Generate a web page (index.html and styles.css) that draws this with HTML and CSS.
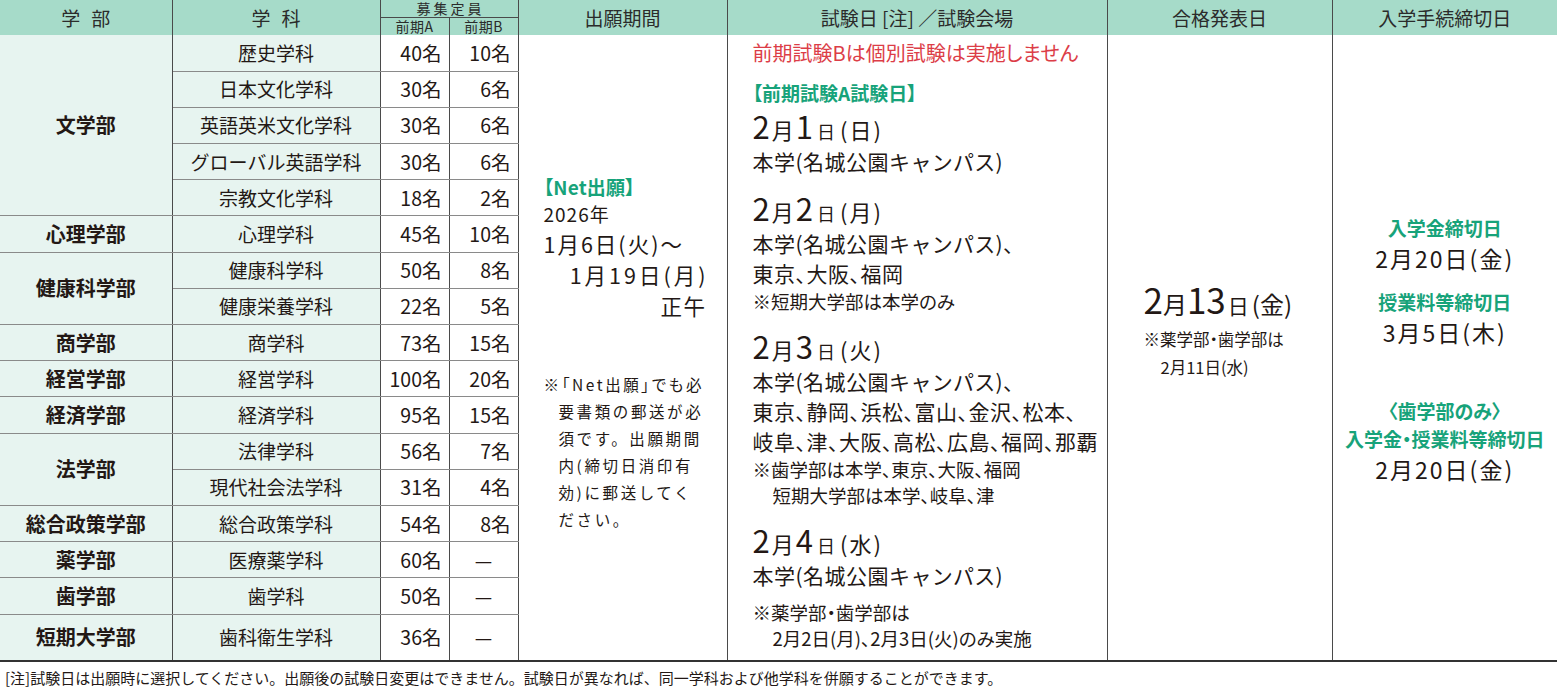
FILE: index.html
```html
<!DOCTYPE html>
<html lang="ja">
<head>
<meta charset="utf-8">
<title>入試日程</title>
<link rel="stylesheet" href="styles.css">
</head>
<body>
<table class="tbl">
  <colgroup>
    <col class="c-fac"><col class="c-dep"><col class="c-n"><col class="c-n">
    <col class="c-app"><col class="c-exam"><col class="c-res"><col class="c-proc">
  </colgroup>
  <thead>
    <tr class="h1">
      <th rowspan="2" class="sp">学部</th>
      <th rowspan="2" class="sp">学科</th>
      <th colspan="2" class="cap">募集定員</th>
      <th rowspan="2">出願期間</th>
      <th rowspan="2">試験日 [注] ／試験会場</th>
      <th rowspan="2">合格発表日</th>
      <th rowspan="2" class="last">入学手続締切日</th>
    </tr>
    <tr class="h2">
      <th class="sub">前期A</th>
      <th class="sub">前期B</th>
    </tr>
  </thead>
  <tbody>
    <tr>
      <td rowspan="5" class="fac">文学部</td>
      <td class="dep">歴史学科</td><td class="num">40名</td><td class="num">10名</td>
      <td rowspan="17" class="app">
        <div class="app-in">
          <p class="grn">【Net出願】</p>
          <p class="yr">2026年</p>
          <p class="ad">1月6日(火)〜</p>
          <p class="ad r wide">1月19日(月)</p>
          <p class="ad r">正午</p>
          <div class="anote">
            <p class="first">※「Net出願」でも必</p>
            <p class="in">要書類の郵送が必</p>
            <p class="in">須です。出願期間</p>
            <p class="in">内(締切日消印有</p>
            <p class="in">効)に郵送してく</p>
            <p class="in">ださい。</p>
          </div>
        </div>
      </td>
      <td rowspan="17" class="exam">
        <p class="red">前期試験Bは個別試験は実施しません</p>
        <p class="grn g2">【前期試験A試験日】</p>
        <p class="bd b1"><span class="n">2</span><span class="m">月</span><span class="n">1</span><span class="dy">日</span><span class="w">(日)</span></p>
        <p class="pl">本学(名城公園<span class="kn">キャンパス</span>)</p>
        <p class="bd"><span class="n">2</span><span class="m">月</span><span class="n">2</span><span class="dy">日</span><span class="w">(月)</span></p>
        <p class="pl">本学(名城公園<span class="kn">キャンパス</span>)、</p>
        <p class="pl">東京、大阪、福岡</p>
        <p class="nt">※短期大学部は本学のみ</p>
        <p class="bd"><span class="n">2</span><span class="m">月</span><span class="n">3</span><span class="dy">日</span><span class="w">(火)</span></p>
        <p class="pl">本学(名城公園<span class="kn">キャンパス</span>)、</p>
        <p class="pl">東京、静岡、浜松、富山、金沢、松本、</p>
        <p class="pl">岐阜、津、大阪、高松、広島、福岡、那覇</p>
        <p class="nt">※歯学部は本学、東京、大阪、福岡</p>
        <p class="nt in">短期大学部は本学、岐阜、津</p>
        <p class="bd"><span class="n">2</span><span class="m">月</span><span class="n">4</span><span class="dy">日</span><span class="w">(水)</span></p>
        <p class="pl">本学(名城公園<span class="kn">キャンパス</span>)</p>
        <p class="nt n4">※薬学部・歯学部は</p>
        <p class="nt in">2月2日(月)、2月3日(火)のみ実施</p>
      </td>
      <td rowspan="17" class="res">
        <p class="rd"><span class="n">2</span><span class="m">月</span><span class="n">13</span><span class="dy">日</span><span class="w">(金)</span></p>
        <p class="rnt">※薬学部・歯学部は</p>
        <p class="rnt in">2月11日(水)</p>
      </td>
      <td rowspan="17" class="proc">
        <div class="proc-in">
          <p class="grn">入学金締切日</p>
          <p class="pd">2月20日(金)</p>
          <p class="grn p2">授業料等締切日</p>
          <p class="pd">3月5日(木)</p>
          <p class="grn p3">〈歯学部のみ〉</p>
          <p class="grn">入学金・授業料等締切日</p>
          <p class="pd">2月20日(金)</p>
        </div>
      </td>
    </tr>
    <tr><td class="dep">日本文化学科</td><td class="num">30名</td><td class="num">6名</td></tr>
    <tr><td class="dep">英語英米文化学科</td><td class="num">30名</td><td class="num">6名</td></tr>
    <tr><td class="dep">グローバル英語学科</td><td class="num">30名</td><td class="num">6名</td></tr>
    <tr><td class="dep">宗教文化学科</td><td class="num">18名</td><td class="num">2名</td></tr>
    <tr><td class="fac">心理学部</td><td class="dep">心理学科</td><td class="num">45名</td><td class="num">10名</td></tr>
    <tr><td rowspan="2" class="fac">健康科学部</td><td class="dep">健康科学科</td><td class="num">50名</td><td class="num">8名</td></tr>
    <tr><td class="dep">健康栄養学科</td><td class="num">22名</td><td class="num">5名</td></tr>
    <tr><td class="fac">商学部</td><td class="dep">商学科</td><td class="num">73名</td><td class="num">15名</td></tr>
    <tr><td class="fac">経営学部</td><td class="dep">経営学科</td><td class="num">100名</td><td class="num">20名</td></tr>
    <tr><td class="fac">経済学部</td><td class="dep">経済学科</td><td class="num">95名</td><td class="num">15名</td></tr>
    <tr><td rowspan="2" class="fac">法学部</td><td class="dep">法律学科</td><td class="num">56名</td><td class="num">7名</td></tr>
    <tr><td class="dep">現代社会法学科</td><td class="num">31名</td><td class="num">4名</td></tr>
    <tr><td class="fac">総合政策学部</td><td class="dep">総合政策学科</td><td class="num">54名</td><td class="num">8名</td></tr>
    <tr><td class="fac">薬学部</td><td class="dep">医療薬学科</td><td class="num">60名</td><td class="num dash">—</td></tr>
    <tr><td class="fac">歯学部</td><td class="dep">歯学科</td><td class="num">50名</td><td class="num dash">—</td></tr>
    <tr class="lastrow"><td class="fac">短期大学部</td><td class="dep">歯科衛生学科</td><td class="num">36名</td><td class="num dash">—</td></tr>
  </tbody>
</table>
<p class="foot">[注]試験日は出願時に選択してください。出願後の試験日変更はできません。試験日が異なれば、同一学科および他学科を併願することができます。</p>
</body>
</html>
```

FILE: styles.css
```css
* { box-sizing: border-box; }
body {
  margin: 0;
  background: #fff;
  color: #231815;
  font-family: "Noto Sans CJK JP", "Noto Sans", sans-serif;
  font-feature-settings: "palt";
}
p { margin: 0; }

.tbl {
  border-collapse: collapse;
  table-layout: fixed;
  width: 1557px;
}
.c-fac { width: 172px; }
.c-dep { width: 208px; }
.c-n { width: 69px; }
.c-app { width: 209px; }
.c-exam { width: 380px; }
.c-res { width: 225px; }
.c-proc { width: 225px; }

th {
  background: #a6dbc9;
  font-weight: 400;
  font-size: 19px;
  line-height: 20px;
  padding: 0;
  border-right: 1px solid #4a4a4a;
  color: #2b2b2b;
  white-space: nowrap;
}
th.last { border-right: none; }
th.sp { letter-spacing: 11px; padding-left: 11px; }
.h1 { height: 17px; }
.h2 { height: 18px; }
th.cap {
  font-size: 14px;
  line-height: 15px;
  letter-spacing: 3px;
  padding-left: 3px;
  border-bottom: 1px solid #4a4a4a;
}
th.sub {
  font-size: 14px;
  line-height: 15px;
  letter-spacing: 0.5px;
}

td {
  padding: 0;
  font-size: 19px;
  line-height: 22px;
  font-feature-settings: normal;
}
tbody tr { height: 36.2px; }
tbody tr.lastrow { height: 47px; }

.fac, .dep {
  background: #e7f4f0;
  text-align: center;
  border-right: 1px solid #4a4a4a;
  border-bottom: 1px solid #8a8a8a;
  white-space: nowrap;
}
.fac { font-weight: 700; font-size: 20px; }
.num {
  text-align: right;
  padding-right: 7px;
  border-right: 1px solid #4a4a4a;
  border-bottom: 1px solid #8a8a8a;
  font-size: 19.5px;
}
.num.dash { text-align: center; padding-right: 0; }
.lastrow td { border-bottom: 2px solid #333; }

.app, .exam, .res, .proc {
  border-bottom: 2px solid #333;
  border-right: 1px solid #4a4a4a;
  font-feature-settings: "palt";
}
.proc { border-right: none; }

.grn { color: #17a37a; font-weight: 700; font-size: 19px; line-height: 26px; height: 26px; white-space: nowrap; }

/* application period */
.app { vertical-align: middle; padding: 0 20px 0 25px; }
.app-in { padding-top: 12px; }
.app .grn { letter-spacing: 0.2px; }
.yr { font-size: 19px; line-height: 28px; height: 28px; letter-spacing: 1px; }
.ad {
  font-size: 21.5px;
  line-height: 31px;
  height: 31px;
  letter-spacing: 2px;
  white-space: nowrap;
  font-feature-settings: normal;
}
.ad.r { text-align: right; letter-spacing: 1.5px; }
.ad.wide { letter-spacing: 3px; margin-right: -2px; }
.anote {
  margin-top: 50px;
  font-size: 15.5px;
  line-height: 27px;
  letter-spacing: 2.6px;
  white-space: nowrap;
}
.anote p { height: 27px; }
.anote .in { padding-left: 15px; font-feature-settings: normal; }

/* exam dates */
.exam { vertical-align: top; padding: 4px 10px 0 25px; }
.red { color: #dc3d47; font-size: 20px; line-height: 28px; height: 28px; white-space: nowrap; }
.g2 { margin-top: 12px; line-height: 28px; height: 28px; }
.bd {
  height: 36px;
  line-height: 36px;
  font-size: 22px;
  margin-top: 16px;
  letter-spacing: 2px;
  white-space: nowrap;
}
.bd span { line-height: 1; }
.bd.b1 { margin-top: 3px; }
.n { font-size: 31px; }
.m { font-size: 22px; }
.dy { font-size: 18px; padding: 0 3px 0 2px; }
.w { font-size: 22px; }
.pl {
  font-size: 21px;
  line-height: 30px;
  height: 30px;
  letter-spacing: 0.5px;
  white-space: nowrap;
}
.kn { font-feature-settings: normal; letter-spacing: 0.3px; }
.nt { font-size: 18.5px; line-height: 26px; height: 26px; white-space: nowrap; }
.nt.in { padding-left: 20px; }
.nt.n4 { margin-top: 9px; }

/* result */
.res { vertical-align: middle; text-align: left; padding: 0 0 34px 36px; }
.rd { height: 44px; line-height: 44px; font-size: 24px; white-space: nowrap; }
.rd span { line-height: 1; }
.rd .n { font-size: 35px; }
.rd .m { font-size: 24px; }
.rd .dy { font-size: 21px; }
.rd .w { font-size: 24px; }
.rnt { font-size: 16.5px; line-height: 28px; height: 28px; white-space: nowrap; }
.rnt.in { padding-left: 17px; }

/* procedure */
.proc { vertical-align: middle; text-align: center; padding-top: 3px; }
.proc .grn { line-height: 28px; height: 28px; }
.pd { font-size: 23px; line-height: 32px; height: 32px; letter-spacing: 2px; white-space: nowrap; }
.p2 { margin-top: 14px; }
.p3 { margin-top: 49px; }

.foot {
  font-size: 15px;
  line-height: 20px;
  padding: 6px 0 0 5px;
  font-feature-settings: normal;
  white-space: nowrap;
}
```
